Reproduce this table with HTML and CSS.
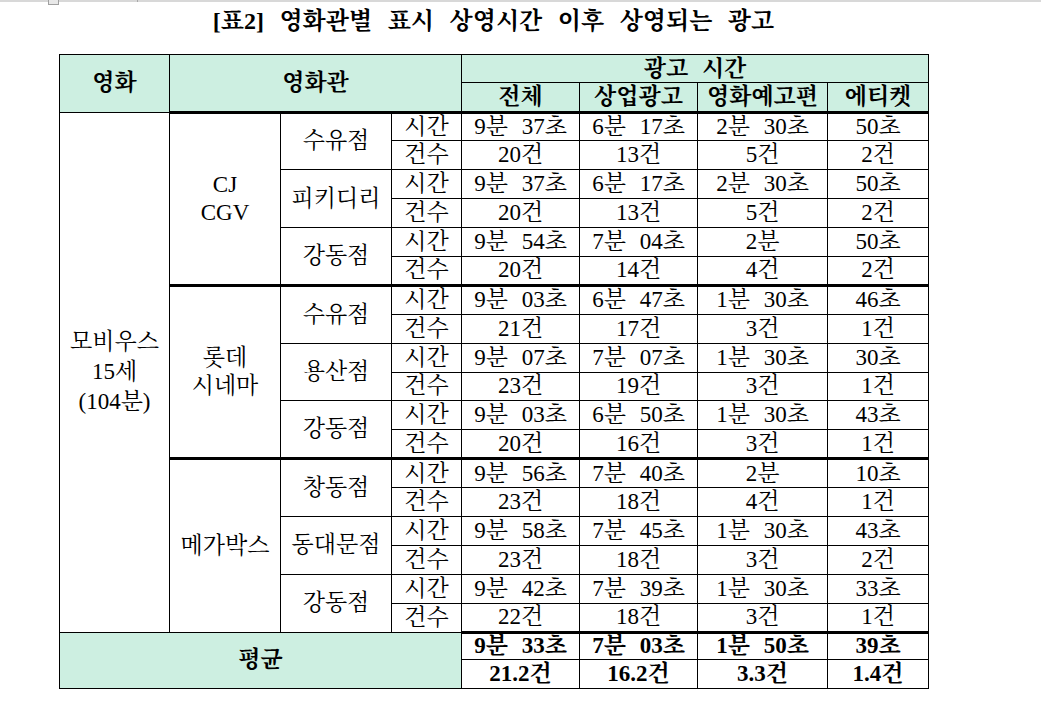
FILE: index.html
```html
<!DOCTYPE html>
<html lang="ko">
<head>
<meta charset="utf-8">
<title>[표2] 영화관별 표시 상영시간 이후 상영되는 광고</title>
<link rel="stylesheet" href="styles.css">
</head>
<body>
<div class="ruler"><span class="ruler-box"></span><span class="ruler-tick"></span></div>
<div class="page">
  <h1 class="title">[표2] 영화관별 표시 상영시간 이후 상영되는 광고</h1>
  <table class="grid">
    <colgroup>
      <col class="c-movie"><col class="c-chain"><col class="c-branch"><col class="c-label">
      <col class="c-total"><col class="c-commercial"><col class="c-trailer"><col class="c-etiquette">
    </colgroup>
    <thead>
      <tr class="hr1">
        <th rowspan="2">영화</th>
        <th colspan="3" rowspan="2">영화관</th>
        <th colspan="4">광고 시간</th>
      </tr>
      <tr class="hr2">
        <th>전체</th><th>상업광고</th><th>영화예고편</th><th>에티켓</th>
      </tr>
    </thead>
    <tbody>
      <tr class="dr">
        <td rowspan="18" class="movie">모비우스<br>15세<br>(104분)</td>
        <td rowspan="6" class="g multi">CJ<br>CGV</td>
        <td rowspan="2" class="g">수유점</td>
        <td class="g">시간</td><td class="g">9분 37초</td><td class="g">6분 17초</td><td class="g">2분 30초</td><td class="g">50초</td>
      </tr>
      <tr class="dr"><td>건수</td><td>20건</td><td>13건</td><td>5건</td><td>2건</td></tr>
      <tr class="dr"><td rowspan="2">피키디리</td><td>시간</td><td>9분 37초</td><td>6분 17초</td><td>2분 30초</td><td>50초</td></tr>
      <tr class="dr"><td>건수</td><td>20건</td><td>13건</td><td>5건</td><td>2건</td></tr>
      <tr class="dr"><td rowspan="2">강동점</td><td>시간</td><td>9분 54초</td><td>7분 04초</td><td>2분</td><td>50초</td></tr>
      <tr class="dr"><td>건수</td><td>20건</td><td>14건</td><td>4건</td><td>2건</td></tr>

      <tr class="dr">
        <td rowspan="6" class="g multi">롯데<br>시네마</td>
        <td rowspan="2" class="g">수유점</td>
        <td class="g">시간</td><td class="g">9분 03초</td><td class="g">6분 47초</td><td class="g">1분 30초</td><td class="g">46초</td>
      </tr>
      <tr class="dr"><td>건수</td><td>21건</td><td>17건</td><td>3건</td><td>1건</td></tr>
      <tr class="dr"><td rowspan="2">용산점</td><td>시간</td><td>9분 07초</td><td>7분 07초</td><td>1분 30초</td><td>30초</td></tr>
      <tr class="dr"><td>건수</td><td>23건</td><td>19건</td><td>3건</td><td>1건</td></tr>
      <tr class="dr"><td rowspan="2">강동점</td><td>시간</td><td>9분 03초</td><td>6분 50초</td><td>1분 30초</td><td>43초</td></tr>
      <tr class="dr"><td>건수</td><td>20건</td><td>16건</td><td>3건</td><td>1건</td></tr>

      <tr class="dr">
        <td rowspan="6" class="g">메가박스</td>
        <td rowspan="2" class="g">창동점</td>
        <td class="g">시간</td><td class="g">9분 56초</td><td class="g">7분 40초</td><td class="g">2분</td><td class="g">10초</td>
      </tr>
      <tr class="dr"><td>건수</td><td>23건</td><td>18건</td><td>4건</td><td>1건</td></tr>
      <tr class="dr"><td rowspan="2">동대문점</td><td>시간</td><td>9분 58초</td><td>7분 45초</td><td>1분 30초</td><td>43초</td></tr>
      <tr class="dr"><td>건수</td><td>23건</td><td>18건</td><td>3건</td><td>2건</td></tr>
      <tr class="dr"><td rowspan="2">강동점</td><td>시간</td><td>9분 42초</td><td>7분 39초</td><td>1분 30초</td><td>33초</td></tr>
      <tr class="dr"><td>건수</td><td>22건</td><td>18건</td><td>3건</td><td>1건</td></tr>
    </tbody>
    <tfoot>
      <tr class="ar1">
        <th colspan="4" rowspan="2" class="avg-label">평균</th>
        <td class="g b">9분 33초</td><td class="g b">7분 03초</td><td class="g b">1분 50초</td><td class="g b">39초</td>
      </tr>
      <tr class="ar2">
        <td class="b">21.2건</td><td class="b">16.2건</td><td class="b">3.3건</td><td class="b">1.4건</td>
      </tr>
    </tfoot>
  </table>
</div>
</body>
</html>
```

FILE: styles.css
```css
html, body {
  margin: 0;
  padding: 0;
  background: #ffffff;
}

body {
  font-family: "Liberation Serif", "Noto Serif CJK KR", "Noto Sans CJK KR", serif;
  color: #000000;
}

.ruler {
  height: 2px;
  background: #d8d8d8;
  display: flex;
  align-items: flex-start;
  padding-left: 48px;
  gap: 78px;
}

.ruler-box {
  width: 9px;
  height: 4px;
  border: 1px solid #a0a0a0;
  border-top: none;
  background: #e8e8e8;
}

.ruler-tick {
  width: 1px;
  height: 2px;
  background: #a8a8a8;
}

.page {
  padding-left: 59px;
  width: 869px;
}

.title {
  margin: 0 0 14px 0;
  height: 38px;
  line-height: 38px;
  font-size: 24px;
  font-weight: bold;
  text-align: center;
  word-spacing: 9.5px;
}

.grid {
  border-collapse: collapse;
  table-layout: fixed;
  width: 869px;
  font-size: 23px;
}

.c-movie { width: 110px; }
.c-chain { width: 111px; }
.c-branch { width: 111px; }
.c-label { width: 70px; }
.c-total { width: 118px; }
.c-commercial { width: 118px; }
.c-trailer { width: 130px; }
.c-etiquette { width: 101px; }

.grid th,
.grid td {
  border: 1px solid #000000;
  padding: 0;
  text-align: center;
  vertical-align: middle;
  line-height: 22px;
  white-space: nowrap;
  word-spacing: 8px;
}

.grid thead th {
  background: #cdefe1;
  font-weight: bold;
}

.hr1 { height: 28px; }
.hr2 { height: 29.5px; }

.dr { height: 28.9px; }

.grid .g {
  border-top: 3px solid #000000;
}

.grid .multi {
  line-height: 28px;
}

.grid .movie {
  line-height: 30px;
}

.ar1 { height: 27.5px; }
.ar2 { height: 29px; }

.avg-label {
  background: #cdefe1;
  font-weight: bold;
}

.grid .b {
  font-weight: bold;
}
```
